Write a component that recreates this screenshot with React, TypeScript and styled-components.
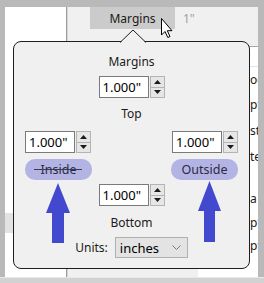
import React from "react";
import styled, { createGlobalStyle } from "styled-components";

const Global = createGlobalStyle`
  html, body { margin: 0; padding: 0; }
  body {
    background: #b9b9b9;
    font-family: "Noto Sans", "Open Sans", "DejaVu Sans", sans-serif;
    font-size: 12px;
    color: #1a1a1a;
  }
`;

const Screen = styled.div`
  position: relative;
  width: 264px;
  height: 283px;
  overflow: hidden;
  background: #b9b9b9;
  display: flex;
  flex-direction: column;
`;

const Window = styled.div`
  margin: 7px 6px 0 5px;
  height: 270px;
  display: grid;
  grid-template-columns: 61px 2px 1fr;
`;

const LeftPane = styled.div`
  background: #ffffff;
  display: flex;
  flex-direction: column;
`;

const SelectedBand = styled.div`
  margin-top: 206px;
  height: 20px;
  background: #e2e2e2;
`;

const Separator = styled.div`
  background: #d4d4d4;
  border-left: 1px solid #9c9c9c;
  box-sizing: border-box;
`;

const Main = styled.div`
  background: #f0f0f0;
  display: flex;
  flex-direction: column;
`;

const TabBar = styled.div`
  height: 22px;
  display: flex;
  align-items: stretch;
  padding-left: 22px;
`;

const Tab = styled.div<{ $active?: boolean }>`
  display: flex;
  align-items: center;
  justify-content: center;
  width: ${(p) => (p.$active ? "85px" : "auto")};
  padding-left: ${(p) => (p.$active ? "0" : "8px")};
  background: ${(p) => (p.$active ? "#cbcbcb" : "transparent")};
  color: ${(p) => (p.$active ? "#1a1a1a" : "#9aa0a6")};
`;

const Body = styled.div`
  flex: 1;
  display: flex;
  justify-content: flex-end;
`;

const Table = styled.div`
  margin-top: 17px;
  width: 60px;
  background: #ffffff;
  border-top: 1px solid #a8a8a8;
  display: flex;
  flex-direction: column;
`;

const TableRow = styled.div<{ $h: number; $line?: boolean }>`
  height: ${(p) => p.$h}px;
  display: flex;
  align-items: center;
  padding-left: 52px;
  border-bottom: ${(p) => (p.$line ? "1px solid #e4e4e4" : "none")};
  box-sizing: border-box;
  overflow: hidden;
  white-space: nowrap;
`;

const StatusBar = styled.div`
  height: 6px;
  background: #d2d2d2;
  border-top: 1px solid #e8e8e8;
  box-sizing: border-box;
`;

/* ---------- popup ---------- */

const Popup = styled.div`
  position: absolute;
  left: 13px;
  top: 41px;
  width: 237px;
  height: 228px;
  box-sizing: border-box;
  background: #f0f0f0;
  border: 1px solid #1e1e1e;
  border-radius: 8px;
  display: flex;
  flex-direction: column;
  align-items: center;
  padding: 11px 11px 0;
`;

const Callout = styled.svg`
  position: absolute;
  left: 105px;
  top: -13px;
`;

const Label = styled.div<{ $mt: number }>`
  margin-top: ${(p) => p.$mt}px;
  height: 16px;
  line-height: 16px;
  color: #1a1a1a;
`;

const SpinWrap = styled.div<{ $mt: number }>`
  margin-top: ${(p) => p.$mt}px;
  display: flex;
  gap: 1px;
  height: 22px;
`;

const SpinText = styled.div`
  width: 50px;
  height: 22px;
  box-sizing: border-box;
  border: 1px solid #7a7a7a;
  background: #ffffff;
  display: flex;
  align-items: center;
  padding-left: 3px;
  font-size: 13px;
  color: #000;
`;

const SpinButtons = styled.div`
  width: 15px;
  display: flex;
  flex-direction: column;
`;

const SpinButton = styled.div`
  flex: 1;
  box-sizing: border-box;
  border: 1px solid #b4b4b4;
  background: #e6e6e6;
  display: flex;
  align-items: center;
  justify-content: center;
  & + & {
    border-top: none;
  }
`;

const SideRow = styled.div<{ $mt: number }>`
  margin-top: ${(p) => p.$mt}px;
  align-self: stretch;
  display: flex;
  justify-content: space-between;
`;

const Pill = styled.div<{ $struck?: boolean }>`
  position: relative;
  width: 67px;
  height: 21px;
  border-radius: 10px;
  background: #b4b4e4;
  color: #2b2b45;
  display: flex;
  align-items: center;
  justify-content: center;
  font-size: 12.5px;
  &::after {
    content: "";
    display: ${(p) => (p.$struck ? "block" : "none")};
    position: absolute;
    left: 9px;
    right: 10px;
    top: 10px;
    height: 1px;
    background: #3a3a50;
  }
`;

const UnitsRow = styled.div`
  margin-top: 6px;
  display: flex;
  align-items: center;
  gap: 7px;
`;

const Select = styled.div`
  width: 73px;
  height: 21px;
  box-sizing: border-box;
  border: 1px solid #b0b0b0;
  background: #e3e3e3;
  display: flex;
  align-items: center;
  justify-content: space-between;
  padding: 0 6px 0 4px;
  font-size: 13px;
  color: #000;
`;

const Overlay = styled.svg`
  position: absolute;
  left: 0;
  top: 0;
  pointer-events: none;
`;

function Spinner({ mt }: { mt: number }) {
  return (
    <SpinWrap $mt={mt}>
      <SpinText>1.000"</SpinText>
      <SpinButtons>
        <SpinButton>
          <svg width="7" height="4" viewBox="0 0 7 4">
            <polygon points="0,4 3.5,0 7,4" fill="#1a1a1a" />
          </svg>
        </SpinButton>
        <SpinButton>
          <svg width="7" height="4" viewBox="0 0 7 4">
            <polygon points="0,0 3.5,4 7,0" fill="#1a1a1a" />
          </svg>
        </SpinButton>
      </SpinButtons>
    </SpinWrap>
  );
}

const rows: { t: string; h: number; line?: boolean }[] = [
  { t: "", h: 20, line: true },
  { t: "oc", h: 25 },
  { t: "pt", h: 25 },
  { t: "st", h: 26 },
  { t: "te", h: 26 },
  { t: "", h: 16 },
  { t: "a", h: 26 },
  { t: "pt", h: 23 },
  { t: "pt", h: 23 },
];

export default function App() {
  return (
    <>
      <Global />
      <Screen>
        <Window>
          <LeftPane>
            <SelectedBand />
          </LeftPane>
          <Separator />
          <Main>
            <TabBar>
              <Tab $active>Margins</Tab>
              <Tab>1"</Tab>
            </TabBar>
            <Body>
              <Table>
                {rows.map((r, i) => (
                  <TableRow key={i} $h={r.h} $line={r.line}>
                    {r.t}
                  </TableRow>
                ))}
              </Table>
            </Body>
          </Main>
        </Window>
        <StatusBar />

        <Popup>
          <Callout width="28" height="14" viewBox="0 0 28 14">
            <polygon points="1,14 14,1 27,14" fill="#f0f0f0" />
            <polyline points="1,13.5 14,1 27,13.5" fill="none" stroke="#1e1e1e" strokeWidth="1" />
          </Callout>
          <Label $mt={1}>Margins</Label>
          <Spinner mt={6} />
          <Label $mt={8}>Top</Label>
          <SideRow $mt={9}>
            <Spinner mt={0} />
            <Spinner mt={0} />
          </SideRow>
          <SideRow $mt={6}>
            <Pill $struck>Inside</Pill>
            <Pill>Outside</Pill>
          </SideRow>
          <Spinner mt={4} />
          <Label $mt={9}>Bottom</Label>
          <UnitsRow>
            <span>Units:</span>
            <Select>
              <span>inches</span>
              <svg width="9" height="5" viewBox="0 0 9 5">
                <polyline points="0.5,0.5 4.5,4.5 8.5,0.5" fill="none" stroke="#7a7a7a" strokeWidth="1" />
              </svg>
            </Select>
          </UnitsRow>
        </Popup>

        <Overlay width="264" height="283" viewBox="0 0 264 283">
          <polygon points="58,183 70,213 64,213 64,243 52,243 52,213 46,213" fill="#4349cf" />
          <polygon points="209.5,181 221,211 215,211 215,242 204,242 204,211 198,211" fill="#4349cf" />
          <path
            d="M161.5 18.5 L161.5 35 L165 31.5 L167.8 37.5 L170 36.5 L167.3 30.7 L172 30.7 Z"
            fill="#ffffff"
            stroke="#000000"
            strokeWidth="1"
            strokeLinejoin="miter"
          />
        </Overlay>
      </Screen>
    </>
  );
}
